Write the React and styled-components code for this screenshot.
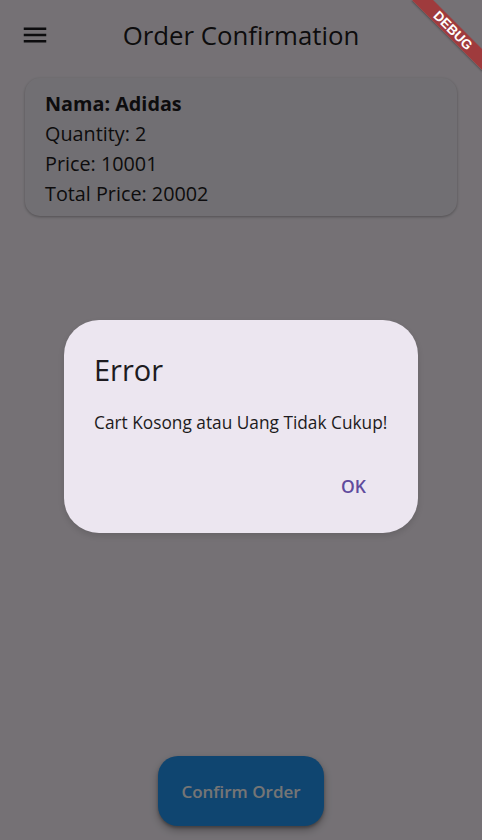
import React from "react";
import styled, { createGlobalStyle } from "styled-components";

const GlobalStyle = createGlobalStyle`
  html, body { margin: 0; padding: 0; }
  body { background: #757376; font-family: "Open Sans", "Noto Sans", sans-serif; }
  * { box-sizing: border-box; }
`;

const Page = styled.div`
  position: relative;
  width: 482px;
  height: 840px;
  overflow: hidden;
  background: #fef7ff;
  display: flex;
  flex-direction: column;
  color: #1d1b20;
`;

const AppBar = styled.header`
  height: 70px;
  display: grid;
  grid-template-columns: 70px 1fr 70px;
  align-items: center;
`;

const MenuButton = styled.div`
  width: 70px;
  height: 70px;
  display: flex;
  align-items: center;
  justify-content: center;
`;

const Title = styled.h1`
  margin: 0;
  text-align: center;
  font-size: 25.8px;
  font-weight: 400;
  line-height: 36px;
  color: #1d1b20;
`;

const Card = styled.section`
  margin: 8px 25px 0;
  padding: 11px 20px 7px;
  border-radius: 15px;
  background: #f7f2fa;
  box-shadow: 0 1px 3px rgba(0, 0, 0, 0.3);
`;

const Line = styled.div`
  font-size: 19.8px;
  line-height: 30px;
  font-weight: ${(p) => (p.$bold ? 700 : 400)};
`;

const Spacer = styled.div`
  flex: 1;
`;

const Fab = styled.button`
  align-self: center;
  margin-bottom: 14px;
  width: 166px;
  height: 70px;
  border: none;
  border-radius: 20px;
  background: #2196f3;
  color: #ffffff;
  font-family: inherit;
  font-size: 17px;
  font-weight: 600;
  box-shadow: 0 4px 8px rgba(0, 0, 0, 0.3), 0 2px 3px rgba(0, 0, 0, 0.25);
`;

const Barrier = styled.div`
  position: absolute;
  inset: 0;
  background: rgba(0, 0, 0, 0.54);
  display: flex;
  justify-content: center;
  align-items: flex-start;
  padding-top: 320px;
`;

const Dialog = styled.div`
  width: 354px;
  height: 213px;
  padding: 30px 30px 22px;
  border-radius: 35px;
  background: #ece6f0;
  display: flex;
  flex-direction: column;
  box-shadow: 0 3px 6px rgba(0, 0, 0, 0.12);
`;

const DialogTitle = styled.h2`
  margin: 0;
  font-size: 29px;
  font-weight: 400;
  line-height: 40px;
  color: #1d1b20;
`;

const DialogContent = styled.p`
  margin: 20px 0 0;
  font-size: 17.3px;
  line-height: 25px;
  color: #1d1b20;
`;

const Actions = styled.div`
  margin-top: auto;
  display: flex;
  justify-content: flex-end;
  padding-right: 7px;
`;

const TextButton = styled.button`
  height: 50px;
  padding: 0 15px;
  border: none;
  border-radius: 25px;
  background: transparent;
  color: #5f4b9d;
  font-family: inherit;
  font-size: 17.5px;
  font-weight: 600;
`;

const Banner = styled.div`
  position: absolute;
  top: 23px;
  left: 403px;
  width: 100px;
  height: 15px;
  transform: rotate(45deg);
  background: rgba(183, 28, 28, 0.63);
  color: #fff;
  font-family: "Liberation Sans", "DejaVu Sans", sans-serif;
  font-weight: 900;
  font-size: 13.5px;
  line-height: 15px;
  text-align: center;
  box-shadow: 0 1px 2px rgba(0, 0, 0, 0.3);
`;

const MenuIcon = () => (
  <svg width="30" height="30" viewBox="0 0 24 24" fill="#1d1b20">
    <path d="M3 18h18v-2H3v2zm0-5h18v-2H3v2zm0-7v2h18V6H3z" />
  </svg>
);

export default function App() {
  return (
    <>
      <GlobalStyle />
      <Page>
        <AppBar>
          <MenuButton>
            <MenuIcon />
          </MenuButton>
          <Title>Order Confirmation</Title>
          <span />
        </AppBar>
        <Card>
          <Line $bold>Nama: Adidas</Line>
          <Line>Quantity: 2</Line>
          <Line>Price: 10001</Line>
          <Line>Total Price: 20002</Line>
        </Card>
        <Spacer />
        <Fab>Confirm Order</Fab>
        <Barrier>
          <Dialog>
            <DialogTitle>Error</DialogTitle>
            <DialogContent>Cart Kosong atau Uang Tidak Cukup!</DialogContent>
            <Actions>
              <TextButton>OK</TextButton>
            </Actions>
          </Dialog>
        </Barrier>
        <Banner>DEBUG</Banner>
      </Page>
    </>
  );
}
